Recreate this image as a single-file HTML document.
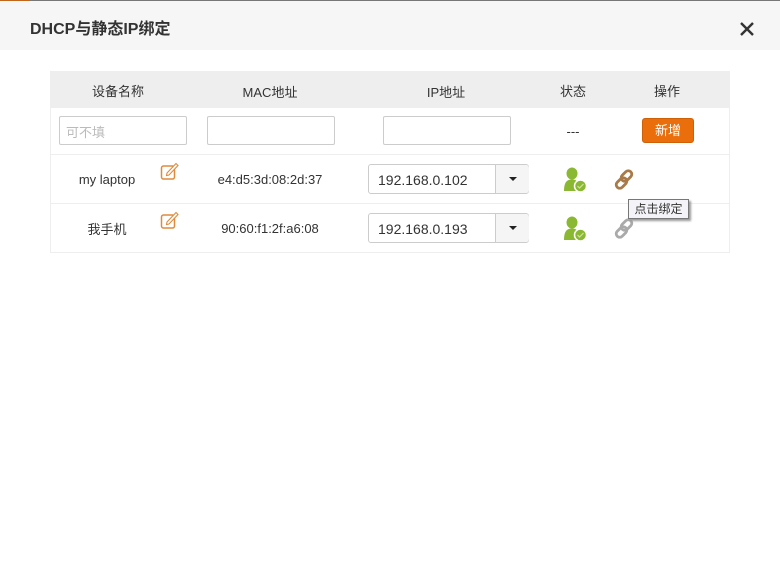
<!DOCTYPE html>
<html><head><meta charset="utf-8"><style>
*{margin:0;padding:0;box-sizing:border-box}
body{width:780px;height:561px;background:#fff;font-family:"Liberation Sans","Noto Sans CJK SC",sans-serif;font-size:13px;color:#333;position:relative;overflow:hidden}
.top{position:absolute;left:0;top:0;width:780px;height:50px;background:#f6f6f6;border-top:1px solid #777}
.top:before{content:"";position:absolute;left:0;top:-1px;width:30px;height:1px;background:#c0651a}
.title{position:absolute;left:30px;top:14px;font-size:16px;font-weight:bold;color:#333}
.close{position:absolute;left:738px;top:18px}
.tbl{position:absolute;left:50px;top:71px;width:680px;height:182px;border:1px solid #eee;border-top:none}
.hd{position:absolute;left:50px;top:71px;width:680px;height:37px;background:#eee}
.t{position:absolute;transform:translateX(-50%);white-space:nowrap}
.line{position:absolute;left:50px;width:680px;height:1px;background:#eee}
.inp{position:absolute;height:29px;border:1px solid #ccc;border-radius:2px;background:#fff}
.sel{position:absolute;width:161px;height:30px;border:1px solid #ccc;border-radius:3px;background:#fff}
.sel span{position:absolute;left:9px;top:7px;font-size:14px}
.sel i{position:absolute;left:126px;top:0;width:34px;height:28px;border-left:1px solid #ccc;background:#f5f5f5;border-radius:0 3px 3px 0}
.sel i:after{content:"";position:absolute;left:13px;top:12px;border:4px solid transparent;border-top:4px solid #222}
.btn{position:absolute;left:642px;top:118px;width:52px;height:25px;background:#ea6e0b;border:1px solid #d06008;border-radius:3px;color:#fff;font-size:13px;text-align:center;line-height:23px}
.tip{position:absolute;left:628px;top:199px;width:61px;height:20px;border:1px solid #777;background:#f4f4f8;font-size:12px;line-height:18px;text-align:center;box-shadow:2px 2px 2px #999}
</style></head><body>
<div class="top"><div class="title">DHCP与静态IP绑定</div>
<svg class="close" width="18" height="18" viewBox="0 0 18 18"><path d="M3 4L15 16M15 4L3 16" stroke="#333" stroke-width="2.4"/></svg></div>
<div class="hd"></div><div class="tbl"></div>
<div class="t" style="left:118px;top:81px">设备名称</div>
<div class="t" style="left:270px;top:82px">MAC地址</div>
<div class="t" style="left:446px;top:82px">IP地址</div>
<div class="t" style="left:573px;top:81px">状态</div>
<div class="t" style="left:667px;top:81px">操作</div>
<div class="inp" style="left:59px;top:116px;width:128px"><span style="position:absolute;left:6px;top:5px;color:#bbb">可不填</span></div>
<div class="inp" style="left:207px;top:116px;width:128px"></div>
<div class="inp" style="left:383px;top:116px;width:128px"></div>
<div class="t" style="left:573px;top:124px">---</div>
<div class="btn">新增</div>
<div class="line" style="top:154px"></div>
<div class="line" style="top:203px"></div>
<div class="t" style="left:107px;top:172px">my laptop</div>
<div class="t" style="left:107px;top:219px">我手机</div>
<svg style="position:absolute;left:160px;top:161px" width="22" height="22" viewBox="0 0 22 22"><rect x="1.5" y="5" width="13" height="13" rx="2" fill="none" stroke="#e08a3c" stroke-width="1.5"/><path d="M7 12L16 2.5L18 4.5L9 14L6.5 14.5Z" fill="#fff" stroke="#e08a3c" stroke-width="1.1"/></svg>
<svg style="position:absolute;left:160px;top:210px" width="22" height="22" viewBox="0 0 22 22"><rect x="1.5" y="5" width="13" height="13" rx="2" fill="none" stroke="#e08a3c" stroke-width="1.5"/><path d="M7 12L16 2.5L18 4.5L9 14L6.5 14.5Z" fill="#fff" stroke="#e08a3c" stroke-width="1.1"/></svg>
<div class="t" style="left:270px;top:172px">e4:d5:3d:08:2d:37</div>
<div class="t" style="left:270px;top:221px">90:60:f1:2f:a6:08</div>
<div class="sel" style="left:368px;top:164px"><span>192.168.0.102</span><i></i></div>
<div class="sel" style="left:368px;top:213px"><span>192.168.0.193</span><i></i></div>
<svg style="position:absolute;left:561px;top:166px" width="28" height="28" viewBox="0 0 28 28"><ellipse cx="11" cy="7.5" rx="5.5" ry="6" fill="#8bb832"/><path d="M3 25C3 16 6 13.5 11 13.5C16 13.5 18 16 18 25Z" fill="#8bb832"/><circle cx="19.5" cy="20" r="6" fill="#8bb832" stroke="#fff" stroke-width="1.5"/><path d="M16.5 20L18.5 22L22.5 18" stroke="#cfe39f" stroke-width="1.2" fill="none"/></svg>
<svg style="position:absolute;left:561px;top:215px" width="28" height="28" viewBox="0 0 28 28"><ellipse cx="11" cy="7.5" rx="5.5" ry="6" fill="#8bb832"/><path d="M3 25C3 16 6 13.5 11 13.5C16 13.5 18 16 18 25Z" fill="#8bb832"/><circle cx="19.5" cy="20" r="6" fill="#8bb832" stroke="#fff" stroke-width="1.5"/><path d="M16.5 20L18.5 22L22.5 18" stroke="#cfe39f" stroke-width="1.2" fill="none"/></svg>
<svg style="position:absolute;left:613px;top:168px" width="24" height="24" viewBox="0 0 24 24"><g fill="none" stroke="#a97a47" stroke-width="2.8"><rect x="10" y="2" width="7" height="12" rx="3.5" transform="rotate(45 13.5 8)"/><rect x="5" y="9" width="7" height="12" rx="3.5" transform="rotate(45 8.5 15)"/></g></svg>
<svg style="position:absolute;left:613px;top:217px" width="24" height="24" viewBox="0 0 24 24"><g fill="none" stroke="#aaa" stroke-width="2.8"><rect x="10" y="2" width="7" height="12" rx="3.5" transform="rotate(45 13.5 8)"/><rect x="5" y="9" width="7" height="12" rx="3.5" transform="rotate(45 8.5 15)"/></g></svg>
<div class="tip">点击绑定</div>
</body></html>
